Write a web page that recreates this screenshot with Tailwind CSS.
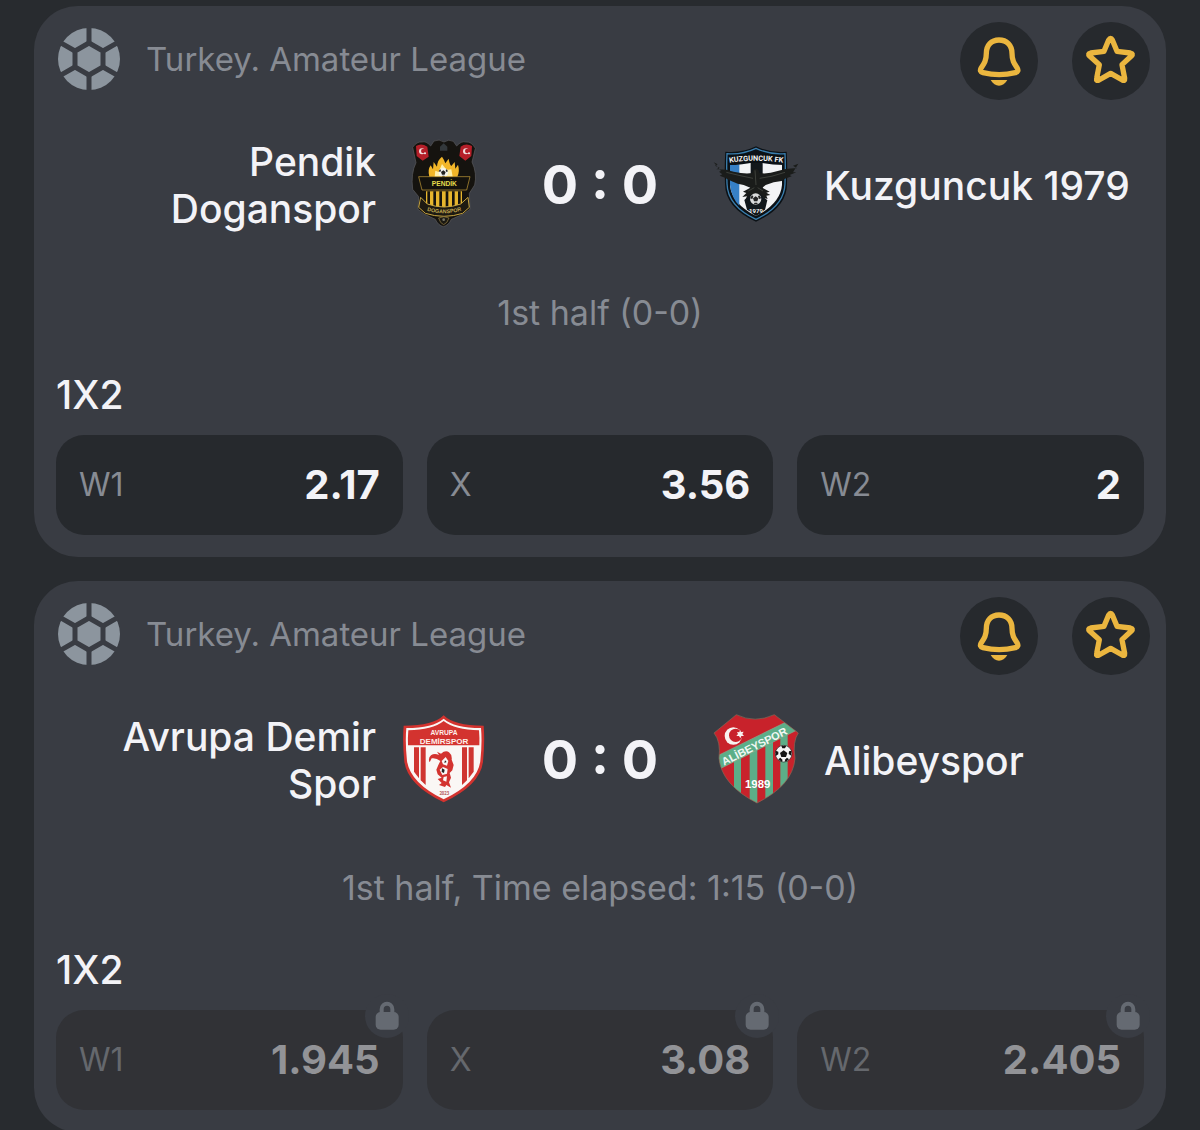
<!DOCTYPE html>
<html lang="en">
<head>
<meta charset="utf-8">
<meta name="viewport" content="width=device-width, initial-scale=1">
<title>Live matches</title>
<script src="https://cdn.jsdelivr.net/npm/@tailwindcss/browser@4"></script>
</head>
<body class="bg-[#282b2f] font-['Inter',sans-serif] text-[#f3f3f7]">

<svg class="hidden" aria-hidden="true">
  <symbol id="ball" viewBox="85 83 186 186">
    <circle cx="178" cy="176" r="93" fill="#8c959e"/>
    <g stroke="#393c43" stroke-width="15" fill="none">
      <path d="M178 128 L220 152 V200 L178 224 L136 200 V152 Z"/>
      <path d="M178 128V80M178 224V272M220 152L264 127M220 200L264 225M136 200L92 225M136 152L92 127"/>
    </g>
  </symbol>
  <symbol id="bell" viewBox="90 66 234 234">
    <path d="M207 120 C184 120 169 136 169 160 C169 181 163 190 154 203 C149 211 151 216 159 218 C188 225 227 225 256 218 C264 216 266 211 261 203 C252 190 246 181 246 160 C246 136 230 120 207 120 Z" fill="none" stroke="#ebb63f" stroke-width="16" stroke-linejoin="round"/>
    <path d="M182 240 H232 C225 251 217 257 207 257 C197 257 189 251 182 240 Z" fill="#ebb63f"/>
  </symbol>
  <symbol id="star" viewBox="426 66 234 234">
    <path d="M536 120 Q542 110 547 120 L561 154 L601 159 Q611 161 604 168 L576 194 L584 235 Q585 244 577 240 L542 220 L507 240 Q498 244 500 235 L508 194 L479 168 Q472 161 482 159 L522 154 Z" fill="none" stroke="#ebb63f" stroke-width="16" stroke-linejoin="round"/>
  </symbol>
  <symbol id="lock" viewBox="75 12 132 132">
    <path d="M125 72 V58 C125 36 157 36 157 58 V72" fill="none" stroke="#656a72" stroke-width="12"/>
    <rect x="107" y="66" width="69" height="53" rx="15" fill="#656a72"/>
  </symbol>
</svg>

<main class="flex h-screen flex-col gap-6 overflow-y-auto px-[34px] pt-1.5 [scrollbar-width:none]">

  <article class="shrink-0 rounded-[44px] bg-[#393c43] px-[22px] pt-4 pb-[22px]">
    <header class="-mr-1.5 flex items-center">
      <svg class="-mt-1 ml-0.5 size-[62px]" aria-hidden="true"><use href="#ball"/></svg>
      <h2 class="-mt-1 ml-[26px] flex-1 text-[33px] leading-10 text-[#878b93]">Turkey. Amateur League</h2>
      <div class="flex gap-[34px]">
        <button type="button" aria-label="Notifications" class="size-[78px] rounded-full bg-[#26292d]"><svg class="size-full"><use href="#bell"/></svg></button>
        <button type="button" aria-label="Favourite" class="size-[78px] rounded-full bg-[#26292d]"><svg class="size-full"><use href="#star"/></svg></button>
      </div>
    </header>

    <div class="mt-[38px] grid grid-cols-[1fr_224px_1fr] items-center">
      <div class="flex items-center justify-end gap-6">
        <p class="text-right text-[39px] leading-[47px] font-medium">Pendik<br>Doganspor</p>
        <svg class="size-[88px] shrink-0 overflow-visible" viewBox="0 33 264 264" role="img" aria-label="Pendik Doganspor crest">
          <path d="M38 52 Q50 34 66 36 Q78 32 92 48 L102 33 Q118 26 132 36 Q146 26 160 34 L170 48 Q184 32 198 36 Q214 34 226 55 L216 96 Q232 130 224 165 L208 190 L210 238 L190 252 L154 268 Q146 286 130 290 Q114 286 106 268 L72 252 L54 238 L56 200 L38 178 Q32 130 48 98 Z" fill="#15130f" stroke="#5b5b5d" stroke-width="2"/>
          <path d="M48 48 Q64 38 82 50 L86 80 L68 92 L50 78 Z M182 50 Q198 38 216 48 L214 78 L196 92 L178 78 Z" fill="#b51f29"/>
          <g fill="#f0dede"><circle cx="66" cy="64" r="9"/><circle cx="198" cy="64" r="9"/></g>
          <g fill="#b51f29"><circle cx="70" cy="63" r="7"/><circle cx="202" cy="63" r="7"/></g>
          <g fill="#eee"><circle cx="75" cy="70" r="3"/><circle cx="207" cy="70" r="3"/></g>
          <path d="M120 50 L131 40 L142 50 V62 H120 Z" fill="#33383b"/>
          <path d="M88 140 Q82 120 92 106 L99 118 L101 96 L111 110 Q112 90 126 80 Q132 88 136 100 L146 86 Q148 102 154 108 L164 96 L166 116 L174 104 Q180 124 172 140 Z" fill="#f2b629"/>
          <path d="M104 140 L106 122 L116 126 L126 102 L140 120 L154 118 L158 140 Z" fill="#fff0ac"/>
          <circle cx="130" cy="128" r="14" fill="#f4f4ee"/>
          <path d="M130 121 l7 5 -3 8 h-8 l-3 -8z M116 124 l4 -6 3 2 -2 6z M144 124 l-4 -6 -3 2 2 6z M125 141 l3 -4 h5 l2 4z" fill="#222"/>
          <path d="M56 140 H210 L200 180 H66 Z" fill="#14120d" stroke="#c8a03a" stroke-width="2"/>
          <text x="133" y="167" text-anchor="middle" font-family="Liberation Sans" font-size="20" font-weight="700" fill="#e6dc4c">PENDİK</text>
          <path d="M78 184 H186 V224 L132 252 L78 224 Z" fill="#e6b52d"/>
          <path d="M86 184V230M104 184V236M122 184V240M141 184V240M160 184V236M178 184V230" stroke="#15130f" stroke-width="8"/>
          <path d="M62 202 L82 222 Q132 240 182 222 L204 202 L208 232 L188 250 Q132 268 76 250 L56 232 Z" fill="#1d1a12" stroke="#c8a642" stroke-width="3"/>
          <path id="ribbon" d="M78 241 Q132 258 188 241" fill="none"/>
          <text text-anchor="middle" font-family="Liberation Sans" font-size="16" font-weight="700" fill="#c4aa52"><textPath href="#ribbon" startOffset="50%">DOGANSPOR</textPath></text>
          <path d="M116 264 Q132 256 147 264 Q142 280 131 284 Q120 280 116 264 Z" fill="#1b1913" stroke="#9b8442" stroke-width="2"/>
          <circle cx="131" cy="269" r="4" fill="#777566"/>
        </svg>
      </div>
      <p class="text-center text-[54px] leading-[68px] font-bold">0 : 0</p>
      <div class="flex items-center gap-6">
        <svg class="size-[88px] shrink-0 overflow-visible" viewBox="21 18 264 264" role="img" aria-label="Kuzguncuk FK crest">
          <path d="M153 34 Q196 55 245 50 Q248 90 246 146 Q246 218 153 260 Q60 218 60 146 Q58 90 61 50 Q110 55 153 34 Z" fill="#0b1116"/>
          <path d="M153 40 Q196 60 240 56 Q242 90 240 146 Q238 213 153 253 Q68 213 66 146 Q64 90 66 56 Q110 60 153 40 Z" fill="none" stroke="#3a7eae" stroke-width="4"/>
          <path d="M75 84 H231 V150 Q226 206 153 243 Q80 206 75 150 Z" fill="#f3f4f5"/>
          <path d="M75 88 H103 V212 Q80 190 75 150 Z" fill="#3680c6"/>
          <path d="M137 84 H173 V232 L153 243 L137 232 Z" fill="#11171b"/>
          <path d="M70 66 Q110 66 153 50 Q196 66 236 66 V90 Q196 90 153 80 Q110 90 72 90 Z" fill="#0b1116"/>
          <path id="kuz" d="M70 84 Q153 70 237 84" fill="none"/>
          <text text-anchor="middle" font-family="Roboto" font-size="22" font-weight="700" fill="#f5f5f5"><textPath href="#kuz" startOffset="50%">KUZGUNCUK FK</textPath></text>
          <path d="M26 82 L38 88 L30 92 L44 98 L34 103 Q62 102 86 110 Q120 118 142 114 Q144 100 154 101 Q162 102 163 114 Q188 118 218 108 Q246 98 276 100 L264 92 L280 86 L264 112 L274 112 L254 120 L260 124 L238 132 L230 138 L206 142 L182 150 L172 158 L194 170 L184 173 L196 180 L184 182 L188 192 L168 186 L154 196 L140 186 L120 196 L126 184 L112 186 L124 174 L114 170 L136 158 L116 150 L98 146 L84 140 L70 134 L60 128 L44 122 L52 118 L42 110 L48 108 Z" fill="#1a1c1a"/>
          <path d="M64 112 Q112 124 144 130 M240 112 Q200 126 164 130 M150 106 L153 150 M130 168 L148 158 M174 168 L158 158" fill="none" stroke="#3d403a" stroke-width="3"/>
          <path d="M118 195 L140 178 L166 178 L187 196 L180 224 L153 240 L126 224 Z" fill="#11171b"/>
          <circle cx="152" cy="192" r="17" fill="#d9dada"/>
          <path d="M152 184 l8 6 -3 9 h-10 l-3 -9z M135 190 l6 -9 4 3 -3 8z M169 190 l-6 -9 -4 3 3 8z M146 208 l3 -5 h7 l3 5z" fill="#222"/>
          <text x="153" y="233" text-anchor="middle" font-family="Roboto" font-size="18" font-weight="700" fill="#f5f5f5">1979</text>
        </svg>
        <p class="text-[39px] leading-[47px] font-medium whitespace-nowrap">Kuzguncuk 1979</p>
      </div>
    </div>

    <p class="mt-[61px] text-center text-[34px] leading-10 text-[#878b93]">1st half (0-0)</p>
    <h3 class="mt-[42px] text-[39px] leading-10 font-medium">1X2</h3>
    <div class="mt-5 grid grid-cols-3 gap-6">
      <button type="button" class="flex h-[100px] items-center justify-between rounded-[28px] bg-[#26292d] px-[23px]"><span class="text-[32px] text-[#878b93]">W1</span><span class="text-[40px] font-bold">2.17</span></button>
      <button type="button" class="flex h-[100px] items-center justify-between rounded-[28px] bg-[#26292d] px-[23px]"><span class="text-[32px] text-[#878b93]">X</span><span class="text-[40px] font-bold">3.56</span></button>
      <button type="button" class="flex h-[100px] items-center justify-between rounded-[28px] bg-[#26292d] px-[23px]"><span class="text-[32px] text-[#878b93]">W2</span><span class="text-[40px] font-bold">2</span></button>
    </div>
  </article>

  <article class="shrink-0 rounded-[44px] bg-[#393c43] px-[22px] pt-4 pb-[22px]">
    <header class="-mr-1.5 flex items-center">
      <svg class="-mt-1 ml-0.5 size-[62px]" aria-hidden="true"><use href="#ball"/></svg>
      <h2 class="-mt-1 ml-[26px] flex-1 text-[33px] leading-10 text-[#878b93]">Turkey. Amateur League</h2>
      <div class="flex gap-[34px]">
        <button type="button" aria-label="Notifications" class="size-[78px] rounded-full bg-[#26292d]"><svg class="size-full"><use href="#bell"/></svg></button>
        <button type="button" aria-label="Favourite" class="size-[78px] rounded-full bg-[#26292d]"><svg class="size-full"><use href="#star"/></svg></button>
      </div>
    </header>

    <div class="mt-[38px] grid grid-cols-[1fr_224px_1fr] items-center">
      <div class="flex items-center justify-end gap-6">
        <p class="text-right text-[39px] leading-[47px] font-medium">Avrupa Demir<br>Spor</p>
        <svg class="size-[88px] shrink-0 overflow-visible" viewBox="15 33 264 264" role="img" aria-label="Avrupa Demirspor crest">
          <path d="M146 31 Q176 62 266 62 Q270 110 264 170 Q256 240 146 292 Q38 240 28 170 Q22 110 26 62 Q116 62 146 31 Z" fill="#d3332f"/>
          <path d="M146 41 Q178 69 258 69 Q262 112 256 168 Q248 234 146 283 Q46 234 36 168 Q30 112 34 69 Q114 69 146 41 Z" fill="#faf7f5"/>
          <path d="M146 48 Q180 75 252 76 Q254 98 253 121 H39 Q38 98 40 76 Q112 75 146 48 Z" fill="#d3332f"/>
          <path d="M57 127 H72 V220 L57 200 Z M77 127 H92 V240 L77 226 Z M201 127 H216 V226 L201 240 Z M221 127 H236 V200 L221 220 Z" fill="#cf3531"/>
          <text x="147" y="89" text-anchor="middle" font-family="Liberation Sans" font-size="20" font-weight="700" fill="#fff0eb">AVRUPA</text>
          <text x="147" y="116" text-anchor="middle" font-family="Liberation Sans" font-size="24" font-weight="700" fill="#fff0eb">DEMİRSPOR</text>
          <path d="M104 172 Q98 160 108 151 Q118 144 132 150 L126 140 L138 146 Q152 134 162 142 Q172 150 170 164 L176 180 L172 196 L164 204 L168 218 L162 232 L168 248 L154 240 L150 246 L132 240 L140 234 L128 222 L140 218 L128 208 L124 194 L130 180 L136 168 Q124 158 110 160 Z" fill="#d3332f"/>
          <path d="M140 168 L152 156 L160 168 L156 182 L144 178 Z M134 194 L144 186 L158 192 L156 206 L142 210 Z M146 216 L156 214 L154 230 L144 226 Z" fill="#faf7f5"/>
          <path d="M141 190 l8 4 -2 10 -7 -3z M150 166 l5 5 -7 3z" fill="#262020"/>
          <text x="148" y="270" text-anchor="middle" font-family="Open Sans" font-size="13" font-weight="700" fill="#b5605c">2023</text>
        </svg>
      </div>
      <p class="text-center text-[54px] leading-[68px] font-bold">0 : 0</p>
      <div class="flex items-center gap-6">
        <svg class="size-[88px] shrink-0 overflow-visible" viewBox="21 33 264 264" role="img" aria-label="Alibeyspor crest">
          <clipPath id="ali"><path d="M94 29 Q150 56 208 29 L280 84 Q262 110 270 160 Q264 240 156 294 Q50 240 42 160 Q48 110 27 84 Z"/></clipPath>
          <g clip-path="url(#ali)">
            <rect x="20" y="20" width="270" height="280" fill="#c8222b"/>
            <path d="M87 150 H108 V300 H87 Z M134 130 H157 V300 H134 Z M181 110 H204 V300 H181 Z M226 90 H248 V300 H226 Z" fill="#5cae88"/>
            <path d="M30 156 L290 28 V68 L40 194 Z" fill="#5cae88"/>
            <path d="M30 156 L290 28 M40 194 L290 68" stroke="#8aa890" stroke-width="2"/>
          </g>
          <path d="M94 29 Q150 56 208 29 L280 84 Q262 110 270 160 Q264 240 156 294 Q50 240 42 160 Q48 110 27 84 Z" fill="none" stroke="#8a6a58" stroke-width="2"/>
          <circle cx="85" cy="93" r="26" fill="#f8f2f0"/><circle cx="92" cy="91" r="20" fill="#c8222b"/>
          <path d="M105 74 l3 7 8 -1 -4 7 5 6 -8 0 -3 7 -4 -7 -8 0 5 -6 -3 -6 7 1z" fill="#f8f2f0"/>
          <path id="band" d="M50 186 L270 76" fill="none"/>
          <text text-anchor="middle" font-family="Liberation Sans" font-size="33" font-weight="700" fill="#f2f7f3"><textPath href="#band" startOffset="47%">ALİBEYSPOR</textPath></text>
          <circle cx="236" cy="146" r="25" fill="#f5f5f5" stroke="#222" stroke-width="2"/>
          <path d="M236 136 l11 8 -4 12 h-14 l-4 -12z M229 122 h15 l-4 8 h-8z M259 137 v15 l-8 -5 1 -8z M212 137 l8 3 v8 l-8 5z M220 163 l6 -5 7 7 -3 5z M252 163 l-6 -5 -7 7 3 5z" fill="#151515"/>
          <text x="158" y="250" text-anchor="middle" font-family="Liberation Sans" font-size="34" font-weight="700" fill="#fff">1989</text>
        </svg>
        <p class="text-[39px] leading-[47px] font-medium">Alibeyspor</p>
      </div>
    </div>

    <p class="mt-[61px] text-center text-[34px] leading-10 text-[#878b93]">1st half, Time elapsed: 1:15 (0-0)</p>
    <h3 class="mt-[42px] text-[39px] leading-10 font-medium">1X2</h3>
    <div class="mt-5 grid grid-cols-3 gap-6">
      <button type="button" disabled class="relative flex h-[100px] items-center justify-between rounded-[28px] bg-[#313236] px-[23px]"><span class="text-[32px] text-[#65686d]">W1</span><span class="text-[40px] font-bold text-[#929397]">1.945</span><svg class="absolute -top-4 -right-1.5 size-11 rounded-full bg-[#393c43]" aria-hidden="true"><use href="#lock"/></svg></button>
      <button type="button" disabled class="relative flex h-[100px] items-center justify-between rounded-[28px] bg-[#313236] px-[23px]"><span class="text-[32px] text-[#65686d]">X</span><span class="text-[40px] font-bold text-[#929397]">3.08</span><svg class="absolute -top-4 -right-1.5 size-11 rounded-full bg-[#393c43]" aria-hidden="true"><use href="#lock"/></svg></button>
      <button type="button" disabled class="relative flex h-[100px] items-center justify-between rounded-[28px] bg-[#313236] px-[23px]"><span class="text-[32px] text-[#65686d]">W2</span><span class="text-[40px] font-bold text-[#929397]">2.405</span><svg class="absolute -top-4 -right-1.5 size-11 rounded-full bg-[#393c43]" aria-hidden="true"><use href="#lock"/></svg></button>
    </div>
  </article>
</main>
</body>
</html>
